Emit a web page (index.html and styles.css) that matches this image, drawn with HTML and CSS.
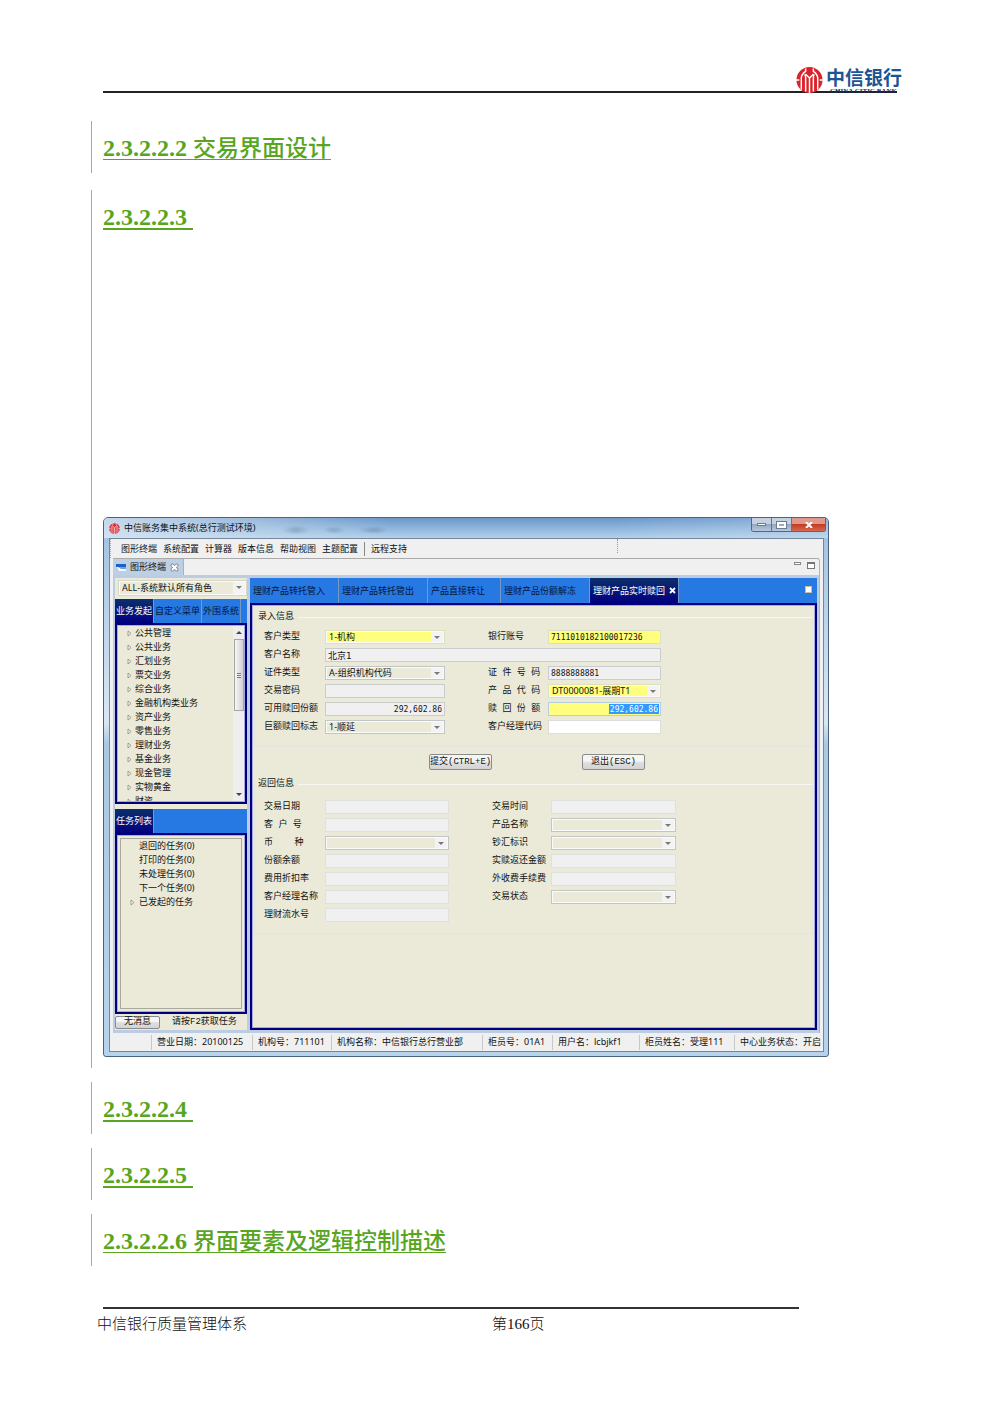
FILE: index.html
```html
<!DOCTYPE html>
<html lang="zh-CN">
<head>
<meta charset="utf-8">
<meta name="viewport" content="width=device-width, initial-scale=1">
<title>中信银行质量管理体系</title>
<link rel="stylesheet" href="styles.css">
</head>
<body>
<svg class="defs" aria-hidden="true">
  <symbol id="citic" viewBox="0 0 28 28">
    <circle cx="14" cy="14" r="13.5" fill="#d9232b"/>
    <g fill="none" stroke="#fff" stroke-width="1.5">
      <path d="M10 2v3c-3 2-4.500 4-4.500 7v12M18 2v3c3 2 4.500 4 4.500 7v12"/>
      <path d="M14 28V12M14 12l-4-4M14 12l4-4M10 26V12c0-2 0-3-1-4M18 26V12c0-2 0-3 1-4"/>
      <path d="M0 14h3.500M24.500 14H28"/>
    </g>
  </symbol>
  <symbol id="twist" viewBox="0 0 5 7"><path d="M1 1l3 2.500-3 2.500z" fill="#f6f5ec" stroke="#8c8c84" stroke-width=".8"/></symbol>
</svg>

<header class="page-header">
  <div class="logo">
    <svg class="logo-mark" aria-hidden="true"><use href="#citic"/></svg>
    <div class="logo-text"><span class="logo-cn">中信银行</span><span class="logo-en">CHINA CITIC BANK</span></div>
  </div>
</header>

<main class="document">
  <section class="revised"><h4 class="heading"><span class="num">2.3.2.2.2 </span>交易界面设计</h4></section>
  <section class="revised figure-section">
    <h4 class="heading bare"><span class="num">2.3.2.2.3 </span></h4>

    <div class="window">
      <div class="titlebar">
        <svg class="app-icon" aria-hidden="true"><use href="#citic"/></svg>
        <span class="title">中信账务集中系统(总行测试环境)</span>
        <div class="win-buttons">
          <button type="button" aria-label="最小化"><i class="min"></i></button><button type="button" aria-label="最大化"><i class="max"></i></button><button type="button" class="close" aria-label="关闭"><svg viewBox="0 0 8 6"><path d="M1 0l6 6M7 0L1 6" stroke="#fff" stroke-width="2"/></svg></button>
        </div>
      </div>

      <div class="client">
        <nav class="menubar">
          <button type="button">图形终端</button><button type="button">系统配置</button><button type="button">计算器</button><button type="button">版本信息</button><button type="button">帮助视图</button><button type="button">主题配置</button><button type="button" class="remote">远程支持</button>
          <i class="grip"></i>
        </nav>

        <div class="view">
          <div class="view-tabs">
            <button type="button" class="view-tab">
              <svg class="view-icon" viewBox="0 0 10 9"><rect width="10" height="3" y="1" fill="#1e5fc4"/><path d="M1 4h9v4H3z" fill="#f5f9ff"/><path d="M2 4h8v2H5z" fill="#62a4e6"/></svg>
              <span>图形终端</span>
              <svg class="view-close" viewBox="0 0 8 8"><path d="M1 1h2l1 1.500L5 1h2v2L5.500 4 7 5v2H5L4 5.500 3 7H1V5l1.500-1L1 3z" fill="#fff" stroke="#777" stroke-width=".7"/></svg>
            </button>
            <span class="view-tools"><i class="tool-min"></i><i class="tool-max"></i></span>
          </div>

          <div class="workbench">
            <aside class="sidebar">
              <div class="role combo">
                <select aria-label="角色"><option>ALL-系统默认所有角色</option></select>
              </div>
              <div class="tabs side-tabs">
                <button type="button" class="active">业务发起</button><button type="button">自定义菜单</button><button type="button">外围系统</button>
              </div>
              <div class="tree">
                <ul>
                  <li><svg><use href="#twist"/></svg>公共管理</li>
                  <li><svg><use href="#twist"/></svg>公共业务</li>
                  <li><svg><use href="#twist"/></svg>汇划业务</li>
                  <li><svg><use href="#twist"/></svg>票交业务</li>
                  <li><svg><use href="#twist"/></svg>综合业务</li>
                  <li><svg><use href="#twist"/></svg>金融机构类业务</li>
                  <li><svg><use href="#twist"/></svg>资产业务</li>
                  <li><svg><use href="#twist"/></svg>零售业务</li>
                  <li><svg><use href="#twist"/></svg>理财业务</li>
                  <li><svg><use href="#twist"/></svg>基金业务</li>
                  <li><svg><use href="#twist"/></svg>现金管理</li>
                  <li><svg><use href="#twist"/></svg>实物黄金</li>
                  <li><svg><use href="#twist"/></svg>财资</li>
                </ul>
                <div class="scrollbar"><i class="up"></i><i class="thumb"></i><i class="down"></i></div>
              </div>
              <div class="tabs side-tabs task-tabs"><button type="button" class="active">任务列表</button></div>
              <div class="tasks">
                <ul>
                  <li>退回的任务(0)</li>
                  <li>打印的任务(0)</li>
                  <li>未处理任务(0)</li>
                  <li>下一个任务(0)</li>
                  <li><svg><use href="#twist"/></svg>已发起的任务</li>
                </ul>
              </div>
              <div class="side-foot"><button type="button" class="push">无消息</button><span>请按F2获取任务</span></div>
            </aside>

            <div class="editor">
              <div class="tabs editor-tabs">
                <button type="button">理财产品转托管入</button><button type="button">理财产品转托管出</button><button type="button" class="short">产品直接转让</button><button type="button">理财产品份额解冻</button><button type="button" class="active">理财产品实时赎回<svg viewBox="0 0 7 7"><path d="M1 1l5 5M6 1L1 6" stroke="#fff" stroke-width="1.800"/></svg></button>
                <i class="restore"></i>
              </div>
              <form class="panel">
                <fieldset class="entry">
                  <legend>录入信息</legend>
                  <label for="ctype">客户类型</label>
                  <div class="combo required"><select id="ctype"><option>1-机构</option></select></div>
                  <label class="second" for="acct">银行账号</label>
                  <input id="acct" class="required" value="7111010182100017236">
                  <label for="cname">客户名称</label>
                  <input id="cname" class="wide cjk" value="北京1" readonly>
                  <label for="idtype">证件类型</label>
                  <div class="combo"><select id="idtype"><option>A-组织机构代码</option></select></div>
                  <label class="second" for="idno">证 件 号 码</label>
                  <input id="idno" value="8888888881" readonly>
                  <label for="pwd">交易密码</label>
                  <input id="pwd" type="password" readonly>
                  <label class="second" for="prod">产 品 代 码</label>
                  <div class="combo required"><select id="prod"><option>DT0000081-展期T1</option></select></div>
                  <label for="avail">可用赎回份额</label>
                  <input id="avail" class="amount" value="292,602.86" readonly>
                  <label class="second" for="redeem">赎 回 份 额</label>
                  <input id="redeem" class="amount required picked" value="292,602.86">
                  <label for="huge">巨额赎回标志</label>
                  <div class="combo"><select id="huge"><option>1-顺延</option></select></div>
                  <label class="second" for="mgr">客户经理代码</label>
                  <input id="mgr" class="blank">
                </fieldset>
                <div class="actions">
                  <button type="button" class="push">提交(CTRL+E)</button>
                  <button type="button" class="push">退出(ESC)</button>
                </div>
                <fieldset class="result">
                  <legend>返回信息</legend>
                  <label for="rdate">交易日期</label><input id="rdate" readonly>
                  <label class="second" for="rtime">交易时间</label><input id="rtime" readonly>
                  <label for="rcust">客 户 号</label><input id="rcust" readonly>
                  <label class="second" for="rprod">产品名称</label><div class="combo"><select id="rprod"><option></option></select></div>
                  <label for="rcur">币    种</label><div class="combo"><select id="rcur"><option></option></select></div>
                  <label class="second" for="rflag">钞汇标识</label><div class="combo"><select id="rflag"><option></option></select></div>
                  <label for="rbal">份额余额</label><input id="rbal" readonly>
                  <label class="second" for="ramt">实赎返还金额</label><input id="ramt" readonly>
                  <label for="rrate">费用折扣率</label><input id="rrate" readonly>
                  <label class="second" for="rfee">外收费手续费</label><input id="rfee" readonly>
                  <label for="rmgr">客户经理名称</label><input id="rmgr" readonly>
                  <label class="second" for="rstat">交易状态</label><div class="combo"><select id="rstat"><option></option></select></div>
                  <label for="rser">理财流水号</label><input id="rser" readonly>
                </fieldset>
              </form>
            </div>
          </div>
        </div>

        <div class="statusbar">
          <span></span><span>营业日期：20100125</span><span>机构号：711101</span><span>机构名称：中信银行总行营业部</span><span>柜员号：01A1</span><span>用户名：lcbjkf1</span><span>柜员姓名：受理111</span><span>中心业务状态：开启</span>
        </div>
      </div>
    </div>
  </section>
  <section class="revised"><h4 class="heading bare"><span class="num">2.3.2.2.4 </span></h4></section>
  <section class="revised"><h4 class="heading bare"><span class="num">2.3.2.2.5 </span></h4></section>
  <section class="revised"><h4 class="heading"><span class="num">2.3.2.2.6 </span>界面要素及逻辑控制描述</h4></section>
</main>

<footer class="page-footer"><span>中信银行质量管理体系</span><span>第166页</span></footer>
</body>
</html>
```
FILE: styles.css
```css
* { box-sizing: border-box; }
body {
  margin: 0;
  background: #fff;
  color: #111;
  font-family: "Liberation Serif", "Noto Sans CJK SC", serif;
}
.defs { position: absolute; width: 0; height: 0; }
ul { list-style: none; margin: 0; padding: 0; }
i { display: block; font-style: normal; }
button, input, select { font: inherit; color: inherit; margin: 0; border-radius: 0; }
button { border: 0; background: none; padding: 0; white-space: nowrap; }

/* page header and footer */
.page-header {
  margin: 0 103px 0 103px;
  padding-top: 66px;
  border-bottom: 2px solid #222;
  display: flex;
  justify-content: flex-end;
}
.logo { display: flex; gap: 3px; margin: 0 -5px -4px 0; }
.logo-mark { width: 27px; height: 28px; }
.logo-text { display: flex; flex-direction: column; color: #1b5594; }
.logo-cn { font: 700 19px/21px "Noto Sans CJK SC", sans-serif; }
.logo-en { font: 700 7px/8px "Liberation Serif", serif; padding-left: 4px; color: #0f2c57; }
.page-footer {
  margin: 41px 201px 0 103px;
  border-top: 2px solid #333;
  padding-top: 3px;
  display: grid;
  grid-template-columns: 389px 1fr;
  font-size: 15px;
  line-height: 24px;
  font-weight: 300;
}
.page-footer span:first-child { margin-left: -6px; }

/* numbered headings with a revision bar at the left */
.document { padding: 28px 171px 0 91px; display: flex; flex-direction: column; gap: 14px; }
.revised { border-left: 1px solid #a8a8a8; padding-left: 11px; }
.figure-section { margin-top: 3px; padding-bottom: 11px; }
.heading {
  margin: 0;
  height: 52px;
  line-height: 54px;
  font-size: 23px;
  font-weight: 500;
  color: #58a51f;
  white-space: pre;
  text-decoration: underline 1px;
  text-decoration-skip-ink: none;
  text-underline-offset: 3px;
}
.bare { text-decoration-thickness: 2px; }
.num { font-size: 24px; font-weight: 700; }

/* application window */
.window {
  margin-top: 275px;
  padding: 0 4px 4px 5px;
  border: 1px solid #4d637c;
  border-radius: 5px 5px 3px 3px;
  background: linear-gradient(#9fc0e2, #d9e7f4 38%, #a9c8e4 42%, #b7d3ec);
  font: 9px/14px "Noto Sans", "Noto Sans CJK SC", sans-serif;
}
.titlebar {
  height: 20px;
  margin: 0 -4px 0 -5px;
  padding-left: 5px;
  border-radius: 4px 4px 0 0;
  display: flex;
  align-items: center;
  gap: 4px;
  background:
    radial-gradient(14px 5px at 192px 12px, #7c98b8aa, transparent),
    radial-gradient(11px 4px at 230px 12px, #7c98b8aa, transparent),
    radial-gradient(15px 4px at 270px 12px, #7390b1aa, transparent),
    linear-gradient(90deg, #dbe7f3cc, #dbe7f366 22%, #dbe7f300 40% 70%, #dbe7f355),
    linear-gradient(#6b96c6, #86afd9 40%, #b2d0ea);
}
.app-icon { width: 11px; height: 11px; }
.title { flex: 1; }
.win-buttons { display: flex; align-self: flex-start; margin-right: 2px; border: 1px solid #56677e; border-top: 0; border-radius: 0 0 3px 3px; overflow: hidden; }
.win-buttons button { width: 20px; height: 13px; display: flex; align-items: center; justify-content: center; background: linear-gradient(#c3d1e1 45%, #93a9c3 50%, #b5c9de); border-right: 1px solid #64758c; }
.win-buttons .close { width: 33px; border: 0; background: linear-gradient(#dd9a8c 45%, #c33d25 50%, #d8684e); }
.close svg { width: 8px; height: 6px; }
.min { width: 9px; height: 3px; background: #fff; border: 1px solid #6b7b90; }
.max { width: 9px; height: 6px; border: 2px solid #fff; outline: 1px solid #6b7b90; }

.client { border: 1px solid #74879d; background: #f0f0f0; }
.menubar { display: flex; height: 19px; padding-left: 10px; gap: 6px; align-items: center; position: relative; border-left: 1px dotted #aaa; }
.menubar .remote { border-left: 1px solid #888; padding-left: 6px; }
.grip { position: absolute; left: 71%; top: 0; height: 14px; border-left: 1px dotted #999; }

.view { margin: 0 3px; border-top: 1px solid #aaa; border-right: 1px solid #b5b5b5; border-radius: 0 3px 0 0; }
.view-tabs { display: flex; justify-content: space-between; height: 16px; }
.view-tab { display: flex; align-items: center; gap: 4px; padding: 0 4px 0 3px; background: #bccfe4; border-right: 1px solid #a3b3c6; }
.view-icon { width: 10px; height: 9px; }
.view-close { width: 9px; height: 9px; }
.view-tools { display: flex; gap: 6px; padding: 3px 4px 0 0; }
.tool-min { width: 7px; height: 3px; border: 1px solid #888; background: #fff; }
.tool-max { width: 8px; height: 7px; border: 1px solid #777; border-top-width: 2px; background: #fff; }

.workbench { display: flex; gap: 3px; padding: 3px 2px; min-height: 458px; background: #bccde3; }
.sidebar { width: 132px; display: flex; flex-direction: column; background: #ebead9; }
.editor { flex: 1; min-width: 0; display: flex; flex-direction: column; }

/* blue tab strips */
.tabs { display: flex; height: 24px; background: #2678e3; }
.tabs button { padding: 0 3px; border-right: 1px solid #7399c9; text-align: left; color: #04163c; }
.tabs .active { color: #fff; background: linear-gradient(#0c2f6b, #000080); }
.side-tabs button { padding: 0 1px; }
.task-tabs { margin-top: 5px; }
.editor-tabs { height: 25px; position: relative; }
.editor-tabs button { width: 89px; }
.editor-tabs .short { width: 73px; }
.editor-tabs .active { display: flex; align-items: center; gap: 4px; padding-right: 0; }
.editor-tabs .active svg { width: 7px; height: 7px; flex: none; }
.restore { position: absolute; right: 5px; top: 8px; width: 7px; height: 7px; background: #fff; border: 1px solid #cbbf9a; }

/* sidebar contents */
.role { margin: 2px 0 3px 3px; }
.tree, .tasks { border: 2px solid #00007c; outline: 1px solid #a9a9dd; outline-offset: -3px; }
.tree { height: 181px; display: flex; overflow: hidden; padding-right: 1px; }
.tree ul { flex: 1; padding: 1px 0 0 10px; }
.tree li { display: flex; align-items: center; gap: 3px; height: 14px; white-space: nowrap; }
.tree svg, .tasks svg { width: 5px; height: 7px; flex: none; }
.scrollbar { width: 11px; background: #eeeeee; display: flex; flex-direction: column; align-items: center; padding: 6px 0; }
.up, .down, .combo::after { border: 3px solid transparent; border-top-color: #444; border-bottom: 0; width: 0; }
.up { transform: rotate(180deg); }
.thumb { width: 10px; height: 72px; margin: 5px 0 auto; border: 1px solid #a5a5a5; background: repeating-linear-gradient(#777 0 1px, #eee 1px 2px) center/4px 5px no-repeat, linear-gradient(90deg, #f7f7f7, #d0d0d4); }
.tasks { flex: 1; padding: 3px; }
.tasks ul { height: 100%; border: 1px solid #aaa99d; padding: 0 0 0 9px; }
.tasks li { display: flex; align-items: center; gap: 5px; height: 14px; padding-left: 9px; }
.tasks li:last-child { padding-left: 0; gap: 4px; }
.side-foot { height: 16px; display: flex; align-items: center; gap: 12px; font-family: "Liberation Mono", "Noto Sans CJK SC", monospace; }
.side-foot .push { width: 45px; height: 13px; line-height: 11px; }
.push { border: 1px solid #8b8b8b; border-radius: 2px; background: linear-gradient(#f5f5f5 45%, #e0e0e0 50%, #d3d3d3); text-align: center; }

/* transaction form */
.panel { flex: 1; border: 2px solid #00007c; outline: 1px solid #a9a9dd; outline-offset: -3px; background: #ebead9; padding: 5px 2px 0; font-family: "Liberation Mono", "Noto Sans CJK SC", monospace; }
fieldset { display: grid; grid-auto-rows: 14px; row-gap: 4px; margin: 0; min-width: 0; border: 1px solid #e1e5e0; border-top-color: #f8f8f2; }
.entry { grid-template-columns: 61px 120px 103px 113px; padding: 6px 0 12px 9px; }
.result { grid-template-columns: 61px 124px 102px 125px; padding: 9px 0 11px 9px; }
legend { margin-left: -9px; padding: 0 4px 0 3px; height: 14px; }
fieldset label { white-space: pre; }
fieldset .second { padding-left: 43px; }
fieldset input { width: 100%; height: 14px; min-width: 0; padding: 0 2px; border: 1px solid #c9cdd0; background: #f0f0f0; font: 8px "DejaVu Sans Mono", "Noto Sans CJK SC", monospace; }
.result input { border-color: #dfe1df; }
.wide { grid-column: 2 / 5; }
fieldset .cjk { font-size: 9px; }
.amount { text-align: right; }
fieldset .required { background-color: #ffff7d; border-color: #dcdfc0; }
fieldset .blank { background: #fff; border-color: #dddddd; }
fieldset .picked { color: #fff; background: linear-gradient(#3399ff, #3399ff) right 1px center/50px 10px no-repeat #ffff7d; border-color: #b5cfe0; }
.combo { position: relative; height: 14px; border: 1px solid #c3c6c8; background: #ebead9; font-family: "Noto Sans", "Noto Sans CJK SC", sans-serif; }
.combo select { appearance: none; display: block; width: 100%; height: 12px; padding: 0 14px 0 2px; border: 1px solid #fafafa; background: linear-gradient(#f3f3f3, #f3f3f3) right/12px 100% no-repeat; line-height: 10px; }
.combo::after { content: ""; position: absolute; right: 4px; top: 5px; border-width: 3px 3px 0; opacity: .7; }
.role.combo { height: 16px; border-color: #d5d5cc; }
.role select { height: 14px; line-height: 12px; }
.actions { display: flex; gap: 90px; padding: 7px 0 7px 175px; }
.actions .push { width: 63px; height: 16px; line-height: 14px; }

.statusbar { display: grid; grid-template-columns: 41px 101px 79px 151px 70px 87px 95px 1fr; padding-top: 2px; height: 18px; }
.statusbar span { padding-left: 5px; white-space: nowrap; border-left: 1px solid #c8c8c8; height: 15px; }
.statusbar span:first-child { border: 0; }
```
